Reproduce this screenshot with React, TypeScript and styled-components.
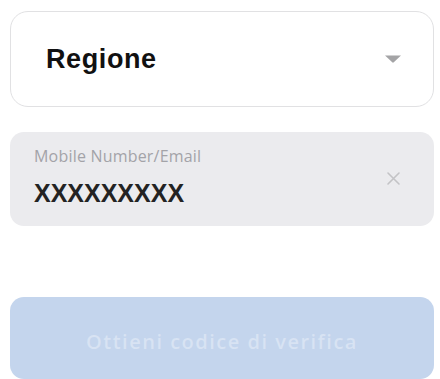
import React from "react";
import styled, { createGlobalStyle } from "styled-components";

const GlobalStyle = createGlobalStyle`
  html, body {
    margin: 0;
    padding: 0;
    background: #ffffff;
  }
  body {
    font-family: "Liberation Sans", Arial, sans-serif;
  }
`;

const StyledPage = styled.div`
  width: 440px;
  height: 379px;
  overflow: hidden;
  box-sizing: border-box;
  padding: 11px 6px 0 10px;
  display: flex;
  flex-direction: column;
`;

const StyledSelect = styled.div`
  height: 98px;
  box-sizing: border-box;
  border: 1.5px solid #e1e1e3;
  border-radius: 18px;
  background: #ffffff;
  display: flex;
  align-items: center;
  justify-content: space-between;
  padding: 0 30px 0 35px;
`;

const StyledSelectText = styled.span`
  color: #111111;
  font-family: "Liberation Sans", Arial, sans-serif;
  font-size: 27px;
  font-weight: 700;
  letter-spacing: 0.6px;
  margin-top: 1px;
`;

const StyledField = styled.div`
  margin-top: 25px;
  height: 97px;
  box-sizing: border-box;
  border-radius: 14px;
  background: #ebebee;
  display: flex;
  align-items: center;
  justify-content: space-between;
  padding: 0 33px 0 24px;
`;

const StyledFieldBody = styled.div`
  display: flex;
  flex-direction: column;
  gap: 14px;
  margin-top: -4px;
`;

const StyledFieldLabel = styled.span`
  color: #a3a3a8;
  font-family: "Open Sans", sans-serif;
  font-size: 16px;
  font-weight: 500;
  letter-spacing: 0.2px;
  line-height: 18px;
`;

const StyledFieldValue = styled.span`
  color: #232323;
  font-family: "Liberation Sans", Arial, sans-serif;
  font-size: 25px;
  font-weight: 700;
  line-height: 28px;
`;

const StyledButton = styled.button`
  margin-top: 71px;
  height: 82px;
  flex-shrink: 0;
  width: 100%;
  border: none;
  border-radius: 14px;
  background: #c4d5ed;
  color: rgba(255, 255, 255, 0.34);
  font-family: "Open Sans", sans-serif;
  font-size: 20px;
  font-weight: 600;
  letter-spacing: 1.5px;
  padding: 6px 0 0;
`;

const ChevronIcon = () => (
  <svg width="20" height="10" viewBox="0 0 20 10">
    <path d="M2 1.5 H18 L10.8 8.3 Q10 9 9.2 8.3 Z" fill="#a4a4a6" />
  </svg>
);

const ClearIcon = () => (
  <svg width="15" height="15" viewBox="0 0 15 15">
    <path d="M2 2 L13 13 M13 2 L2 13" stroke="#c3c3c6" strokeWidth="1.6" strokeLinecap="round" />
  </svg>
);

export default function App() {
  return (
    <>
      <GlobalStyle />
      <StyledPage>
        <StyledSelect>
          <StyledSelectText>Regione</StyledSelectText>
          <ChevronIcon />
        </StyledSelect>
        <StyledField>
          <StyledFieldBody>
            <StyledFieldLabel>Mobile Number/Email</StyledFieldLabel>
            <StyledFieldValue>XXXXXXXXX</StyledFieldValue>
          </StyledFieldBody>
          <ClearIcon />
        </StyledField>
        <StyledButton>Ottieni codice di verifica</StyledButton>
      </StyledPage>
    </>
  );
}
